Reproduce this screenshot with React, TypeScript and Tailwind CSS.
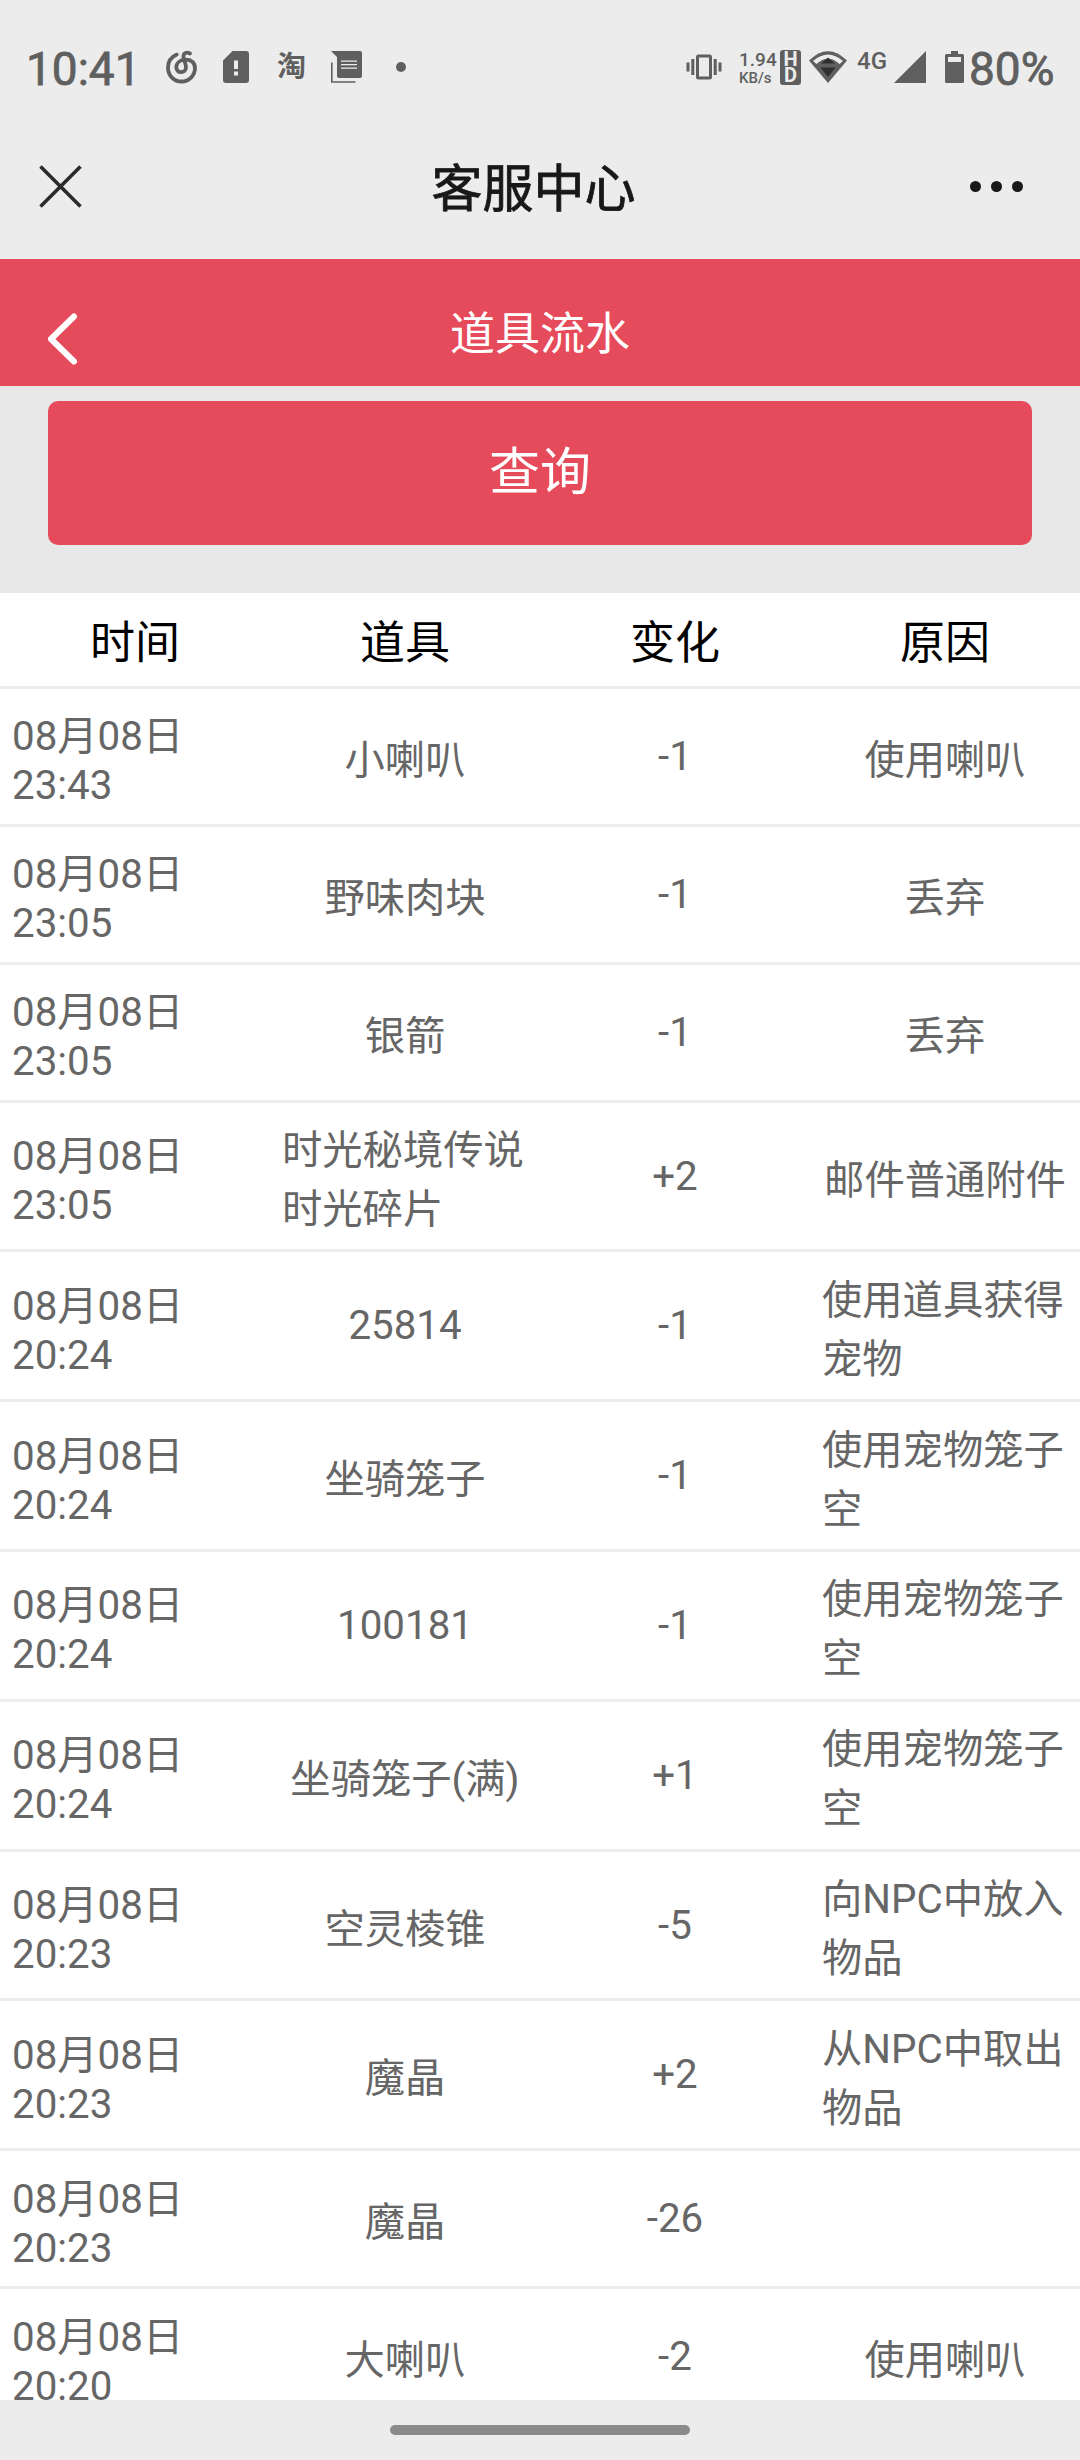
import { ReactNode } from 'react'

interface RecordItem {
  time: string;
  item: string;
  change: string;
  reason: string;
  tall?: boolean;
}

const columns = ["时间", "道具", "变化", "原因"]

const records: RecordItem[] = [
  { time: "08月08日 23:43", item: "小喇叭", change: "-1", reason: "使用喇叭" },
  { time: "08月08日 23:05", item: "野味肉块", change: "-1", reason: "丢弃" },
  { time: "08月08日 23:05", item: "银箭", change: "-1", reason: "丢弃" },
  { time: "08月08日 23:05", item: "时光秘境传说时光碎片", change: "+2", reason: "邮件普通附件", tall: true },
  { time: "08月08日 20:24", item: "25814", change: "-1", reason: "使用道具获得宠物", tall: true },
  { time: "08月08日 20:24", item: "坐骑笼子", change: "-1", reason: "使用宠物笼子空", tall: true },
  { time: "08月08日 20:24", item: "100181", change: "-1", reason: "使用宠物笼子空", tall: true },
  { time: "08月08日 20:24", item: "坐骑笼子(满)", change: "+1", reason: "使用宠物笼子空", tall: true },
  { time: "08月08日 20:23", item: "空灵棱锥", change: "-5", reason: "向NPC中放入物品", tall: true },
  { time: "08月08日 20:23", item: "魔晶", change: "+2", reason: "从NPC中取出物品", tall: true },
  { time: "08月08日 20:23", item: "魔晶", change: "-26", reason: "" },
  { time: "08月08日 20:20", item: "大喇叭", change: "-2", reason: "使用喇叭" },
]

function StatusBar() {
  return (
    <div className="flex h-[120px] items-start justify-between pl-[26px] pr-[24px] pt-[40px] text-[#5f5f5f]">
      <div className="flex h-[54px] items-center">
        <span className="w-[115px] pt-[3px] text-[46px] leading-[54px] [-webkit-text-stroke:0.8px]">10:41</span>
        <svg className="ml-[25px]" width="32" height="34" viewBox="0 0 32 34" fill="none" stroke="currentColor" strokeWidth="3.800" strokeLinecap="round">
          <path d="M10.800 4.600C5 7 2 12 2 18A13.500 13.500 0 0 0 29 18C29 12.500 25 9.500 19.500 9.700C13.500 10 10.300 13.300 10.300 17.300C10.300 24 20 23.800 20 17C20 13.500 17.400 9.500 17.400 6.500C17.400 2.500 21 2 24 3.500" />
        </svg>
        <svg className="ml-[25px]" width="26" height="32" viewBox="0 0 26 32" fill="currentColor">
          <path fillRule="evenodd" d="M9.500 0H23a3 3 0 0 1 3 3v26a3 3 0 0 1-3 3H3a3 3 0 0 1-3-3V9.500ZM11 9.500v8.500h4V9.500ZM11 20.500v4h4v-4Z" />
        </svg>
        <span className="ml-[28px] w-[30px] text-[29px] font-bold leading-[54px]">淘</span>
        <svg className="ml-[24px]" width="31" height="32" viewBox="0 0 31 32" fill="currentColor">
          <path fillRule="evenodd" d="M0 0H29a2 2 0 0 1 2 2V25a2 2 0 0 1-2 2H8a2 2 0 0 1-2-2V6ZM10 9.500v1.300h16V9.500ZM10 13v1.300h16V13ZM10 16.500v1.300h16v-1.300Z" />
          <path d="M.8 11.500V31H24.500" fill="none" stroke="currentColor" strokeWidth="1.600" />
        </svg>
        <span className="ml-[34px] size-[10px] rounded-full bg-[#5f5f5f]" />
      </div>
      <div className="flex h-[54px] items-center">
        <svg width="36" height="26" viewBox="0 0 36 26" fill="none" stroke="currentColor" strokeWidth="3">
          <rect x="11.500" y="2" width="13" height="22" rx="1" />
          <path d="M6.800 5v16M29.200 5v16M2 8.500v9M34 8.500v9" />
        </svg>
        <span className="ml-[17px] flex w-[36px] flex-col pt-px">
          <span className="text-[19px] font-medium leading-[20px]">1.94</span>
          <span className="text-[15px] font-medium leading-[16px]">KB/s</span>
        </span>
        <span className="ml-[5px] flex h-[35px] w-[21px] flex-col items-center justify-center rounded-[3px] bg-[#5f5f5f] text-[20px] font-bold leading-[16px] text-[#ececec]">
          <span>H</span>
          <span>D</span>
        </span>
        <svg className="ml-[8px]" width="38" height="32" viewBox="0 0 38 32">
          <path d="M0 9.500Q19-9 38 9.500L19 32Z" fill="#5f5f5f" />
          <path d="M4 10Q19-3 34 10L30.500 13Q19 2.500 7.500 13Z" fill="#ececec" />
          <path d="M12 12.500L19 6.500L26 12.500ZM11.500 16.500H26.500L19 26Z" fill="#303030" />
        </svg>
        <span className="mb-[12px] ml-[10px] w-[30px] text-[24px] font-medium leading-[24px]">4G</span>
        <svg className="ml-[7px]" width="32" height="32" viewBox="0 0 32 32" fill="currentColor">
          <path d="M32 0V32H0Z" />
        </svg>
        <svg className="ml-[19px]" width="19" height="32" viewBox="0 0 19 32" fill="currentColor">
          <path fillRule="evenodd" d="M6 0h7v3h4.500A1.500 1.500 0 0 1 19 4.500v26A1.500 1.500 0 0 1 17.500 32h-16A1.500 1.500 0 0 1 0 30.500v-26A1.500 1.500 0 0 1 1.500 3H6ZM3 6v5h13V6Z" />
        </svg>
        <span className="ml-[5px] w-[87px] pt-[3px] text-[46px] leading-[54px] [-webkit-text-stroke:0.8px]">80%</span>
      </div>
    </div>
  )
}

function TitleBar() {
  return (
    <div className="flex h-[139px] items-start justify-between pl-[39px] pr-[57px] pt-[33px] text-[#181818]">
      <svg className="mt-[12px]" width="43" height="43" viewBox="0 0 43 43" fill="none" stroke="#2b2b2b" strokeWidth="3.600">
        <path d="M1.500 1.500L41.500 41.500M41.500 1.500L1.500 41.500" />
      </svg>
      <h1 className="ml-[15px] pt-[2px] text-[51px] leading-[70px] [-webkit-text-stroke:0.8px]">客服中心</h1>
      <div className="mt-[28px] flex gap-[10px]">
        <span className="size-[11px] rounded-full bg-[#181818]" />
        <span className="size-[11px] rounded-full bg-[#181818]" />
        <span className="size-[11px] rounded-full bg-[#181818]" />
      </div>
    </div>
  )
}

function Cell({ children }: { children: ReactNode }) {
  return <div className="flex items-center justify-center px-3 leading-[normal]">{children}</div>
}

function RecordRow({ record }: { record: RecordItem }) {
  return (
    <div className={`grid shrink-0 grid-cols-4 border-b-[3px] border-[#ececec] text-[40.3px] text-[#666] ${
      record.tall ? 'h-[149.8px]' : 'h-[137.9px]'
    }`}>
      <div className="flex items-center px-3 pt-[10px] leading-[49px]">{record.time}</div>
      <Cell>{record.item}</Cell>
      <Cell>{record.change}</Cell>
      <Cell>{record.reason}</Cell>
    </div>
  )
}

export default function App() {
  return (
    <div className="flex h-[2460px] w-[1080px] flex-col overflow-hidden bg-[#ececec] font-['Roboto','Noto_Sans_CJK_SC',sans-serif]">
      <StatusBar />
      <TitleBar />
      <div className="grid h-[127px] grid-cols-[1fr_auto_1fr] items-center bg-[#e64b5b] pt-[21px] text-white">
        <svg className="ml-[47px] mt-[11px]" width="31" height="52" viewBox="0 0 31 52" fill="none" stroke="currentColor" strokeWidth="6" strokeLinecap="round" strokeLinejoin="round">
          <path d="M27 3.500L4 26L27 48.500" />
        </svg>
        <h2 className="pt-[3px] text-[45px] leading-[60px]">道具流水</h2>
      </div>
      <div className="h-[207px] bg-[#e8e8e8] px-12 pt-[15px]">
        <button className="h-[144px] w-full rounded-[10px] bg-[#e64b5b] text-[51px] leading-[70px] text-white">查询</button>
      </div>
      <div className="flex h-[1807px] flex-col overflow-hidden bg-white">
        <div className="grid h-[96px] shrink-0 grid-cols-4 border-b-[3px] border-[#ececec] text-[45px] text-black">
          {columns.map((name) => (
            <Cell key={name}>{name}</Cell>
          ))}
        </div>
        {records.map((record, index) => (
          <RecordRow key={index} record={record} />
        ))}
      </div>
      <div className="flex h-[60px] justify-center pt-[25px]">
        <div className="h-[10px] w-[300px] rounded-full bg-[#8a8a8a]" />
      </div>
    </div>
  )
}
